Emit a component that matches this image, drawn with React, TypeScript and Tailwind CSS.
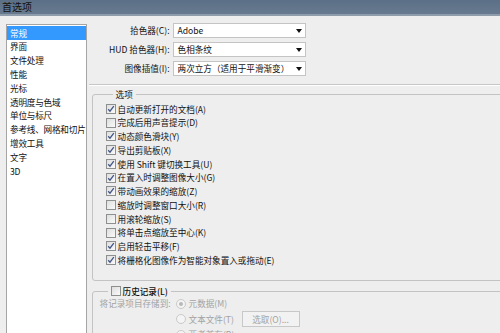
import React from 'react';

const navItems = ['常规', '界面', '文件处理', '性能', '光标', '透明度与色域', '单位与标尺', '参考线、网格和切片', '增效工具', '文字', '3D'];

const rows = [
  { label: '拾色器(C):', value: 'Adobe' },
  { label: 'HUD 拾色器(H):', value: '色相条纹' },
  { label: '图像插值(I):', value: '两次立方（适用于平滑渐变）' },
];

const options = [
  { text: '自动更新打开的文档(A)', on: true },
  { text: '完成后用声音提示(D)', on: false },
  { text: '动态颜色滑块(Y)', on: true },
  { text: '导出剪贴板(X)', on: true },
  { text: '使用 Shift 键切换工具(U)', on: true },
  { text: '在置入时调整图像大小(G)', on: true },
  { text: '带动画效果的缩放(Z)', on: true },
  { text: '缩放时调整窗口大小(R)', on: false },
  { text: '用滚轮缩放(S)', on: false },
  { text: '将单击点缩放至中心(K)', on: false },
  { text: '启用轻击平移(F)', on: true },
  { text: '将栅格化图像作为智能对象置入或拖动(E)', on: true },
];

const Check = ({ on }: { on: boolean }) => (
  <span className="w-[10px] h-[10px] border border-[#8e8f8f] bg-gradient-to-br from-[#dedede] to-[#fafafa] flex items-center justify-center shrink-0">
    {on && (
      <svg width="8" height="8" viewBox="0 0 8 8">
        <path d="M1.2 4.3 L3 6.2 L6.8 1.2" fill="none" stroke="#42568a" strokeWidth="1.3" />
      </svg>
    )}
  </span>
);

const Radio = ({ on }: { on: boolean }) => (
  <span className="w-[10px] h-[10px] rounded-full border border-[#cacaca] bg-[#f4f4f4] flex items-center justify-center shrink-0">
    {on && <span className="w-[4px] h-[4px] rounded-full bg-[#b8b8b8]" />}
  </span>
);

export default function App() {
  return (
    <div className="w-[500px] h-[333px] overflow-hidden bg-[#eeeeee] text-[8.6px] leading-none text-[#111] font-['Noto_Sans_CJK_SC',sans-serif]">
      <div className="h-[16px] bg-gradient-to-b from-[#5b6f86] to-[#677a90] border-b-[2px] border-[#8e9cac] flex items-center pl-[2px] text-[10px] text-[#111]">
        首选项
      </div>

      <div className="flex">
        <div className="ml-[6px] mt-[8px] w-[83px] h-[320px] bg-white border border-[#a5a5a5] pt-[1px]">
          {navItems.map((item, i) => (
            <div
              key={item}
              className={`h-[13.8px] flex items-center pl-[3px] whitespace-nowrap tracking-[-0.2px] ${i === 0 ? 'bg-[#3399ff] text-white' : ''}`}
            >
              {item}
            </div>
          ))}
        </div>

        <div className="ml-[5px] w-[420px] shrink-0">
          <div className="mt-[7px] grid grid-cols-[78px_133px] gap-x-[3px] gap-y-[4px]">
            {rows.map((r) => (
              <React.Fragment key={r.label}>
                <div className="h-[15px] flex items-center justify-end whitespace-nowrap">{r.label}</div>
                <div className="h-[15px] bg-white border border-[#c4c4c4] flex items-center justify-between pl-[4px] pr-[3px]">
                  <span className="whitespace-nowrap">{r.value}</span>
                  <svg width="6" height="4" viewBox="0 0 6 4">
                    <path d="M0 0 H6 L3 4 Z" fill="#111" />
                  </svg>
                </div>
              </React.Fragment>
            ))}
          </div>

          <div className="mt-[8px] -ml-[3px] border-t border-[#c6c6c6] border-b border-b-white" />

          <fieldset className="mt-[1px] border border-[#c3c3c3] rounded-[3px] pl-[13px] pb-[13px]">
            <legend className="ml-[7px] px-[3px] h-[14px] leading-[14px]">选项</legend>
            <div className="mt-[1px]">
              {options.map((o) => (
                <div key={o.text} className="h-[13.75px] flex items-center gap-[2px] whitespace-nowrap">
                  <Check on={o.on} />
                  <span>{o.text}</span>
                </div>
              ))}
            </div>
          </fieldset>

          <fieldset className="mt-[3px] border border-[#c3c3c3] rounded-[3px] pl-[7px] pb-[10px]">
            <legend className="ml-[8px] px-[3px] h-[14px] flex items-center gap-[2px]">
              <Check on={false} />
              <span className="font-medium">历史记录(L)</span>
            </legend>
            <div className="-mt-[1px] flex text-[#a3a3a3]">
              <div className="w-[76px] h-[13px] flex items-center whitespace-nowrap">将记录项目存储到:</div>
              <div className="flex flex-col">
                <div className="h-[13px] flex items-center gap-[3px]">
                  <Radio on={true} />
                  <span>元数据(M)</span>
                </div>
                <div className="h-[18px] flex items-center gap-[3px]">
                  <Radio on={false} />
                  <span className="w-[48px] whitespace-nowrap">文本文件(T)</span>
                  <span className="ml-[2px] w-[58px] h-[16px] border border-[#c8c8c8] bg-[#f2f2f2] flex items-center justify-center">选取(O)...</span>
                </div>
                <div className="h-[13px] flex items-center gap-[3px]">
                  <Radio on={false} />
                  <span>两者兼有(B)</span>
                </div>
              </div>
            </div>
          </fieldset>
        </div>
      </div>
    </div>
  );
}
